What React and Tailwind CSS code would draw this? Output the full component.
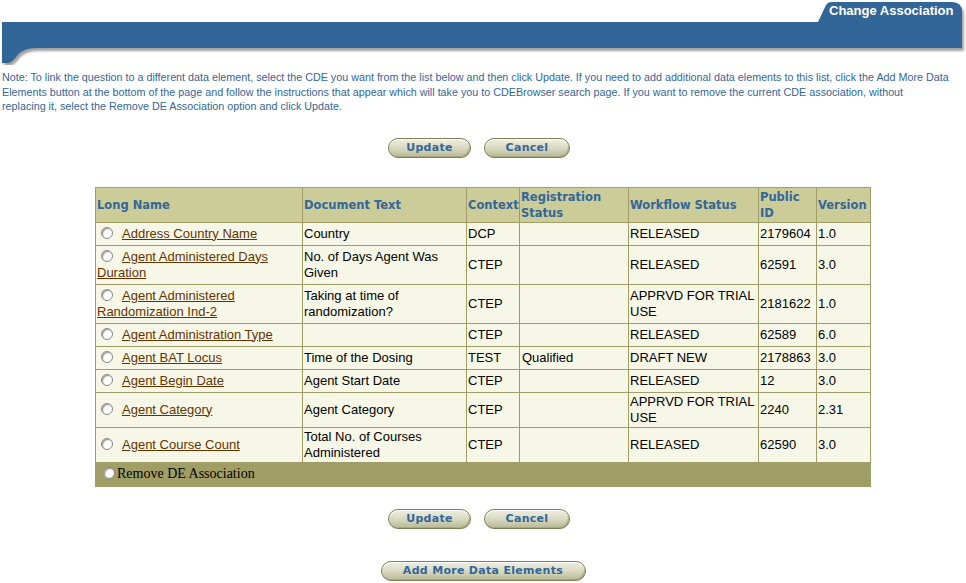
import React from 'react';

const sans = { fontFamily: '"Liberation Sans", Arial, sans-serif' };
const tahoma = { fontFamily: '"DejaVu Sans", Verdana, sans-serif' };
const serif = { fontFamily: '"Liberation Serif", "Times New Roman", serif' };

const rows = [
  { name: ['Address Country Name'], doc: ['Country'], ctx: 'DCP', reg: '', wf: ['RELEASED'], id: '2179604', ver: '1.0', h: 'h-[23px]' },
  { name: ['Agent Administered Days', 'Duration'], doc: ['No. of Days Agent Was', 'Given'], ctx: 'CTEP', reg: '', wf: ['RELEASED'], id: '62591', ver: '3.0', h: 'h-[39px]' },
  { name: ['Agent Administered', 'Randomization Ind-2'], doc: ['Taking at time of', 'randomization?'], ctx: 'CTEP', reg: '', wf: ['APPRVD FOR TRIAL', 'USE'], id: '2181622', ver: '1.0', h: 'h-[39px]' },
  { name: ['Agent Administration Type'], doc: [], ctx: 'CTEP', reg: '', wf: ['RELEASED'], id: '62589', ver: '6.0', h: 'h-[23px]' },
  { name: ['Agent BAT Locus'], doc: ['Time of the Dosing'], ctx: 'TEST', reg: 'Qualified', wf: ['DRAFT NEW'], id: '2178863', ver: '3.0', h: 'h-[23px]' },
  { name: ['Agent Begin Date'], doc: ['Agent Start Date'], ctx: 'CTEP', reg: '', wf: ['RELEASED'], id: '12', ver: '3.0', h: 'h-[23px]' },
  { name: ['Agent Category'], doc: ['Agent Category'], ctx: 'CTEP', reg: '', wf: ['APPRVD FOR TRIAL', 'USE'], id: '2240', ver: '2.31', h: 'h-[35px]' },
  { name: ['Agent Course Count'], doc: ['Total No. of Courses', 'Administered'], ctx: 'CTEP', reg: '', wf: ['RELEASED'], id: '62590', ver: '3.0', h: 'h-[35px]' },
];

const Lines = ({ items }) =>
  items.map((t, i) => (
    <React.Fragment key={i}>
      {i > 0 && <br />}
      {t}
    </React.Fragment>
  ));

const Radio = ({ className = '' }) => (
  <span
    className={`inline-block w-[12px] h-[12px] rounded-full border border-[#8a8a8a] bg-[radial-gradient(circle_at_65%_65%,#ffffff_40%,#dcdcdc_100%)] shadow-[inset_1px_1px_1px_#9a9a9a] align-[-1px] ${className}`}
  />
);

const Button = ({ children, w }) => (
  <button
    className={`h-[20px] ${w} rounded-full border border-[#7e7e56] bg-linear-to-b from-[#efefe2] via-[#d9d9c2] to-[#b9b996] shadow-[inset_0_1px_0_#ffffff,inset_-1px_-1px_0_#a8a884] text-[11px] font-bold text-[#336699] leading-none tracking-[0.3px]`}
    style={tahoma}
  >
    {children}
  </button>
);

const Header = () => (
  <div className="relative h-[65px]">
    <svg width="966" height="65" className="absolute inset-0">
      <defs>
        <filter id="sh" x="-2%" y="-20%" width="104%" height="160%">
          <feDropShadow dx="2" dy="3" stdDeviation="1" floodColor="#555" floodOpacity="0.55" />
        </filter>
      </defs>
      <path
        d="M2 22 H818 L826 5 Q828 2 832 2 H952 Q962 2 962 12 V48 H38 C24 48 20 52 16 57 C12 62 10 63 6 63 H2 Z"
        fill="#336699"
        filter="url(#sh)"
      />
    </svg>
    <span className="absolute left-[829px] top-[3px] text-[13px] font-bold text-white leading-[16px]" style={sans}>
      Change Association
    </span>
  </div>
);

export default function App() {
  return (
    <div className="w-[966px] h-[583px] bg-white overflow-hidden" style={sans}>
      <Header />

      <p className="mt-[5px] px-[2px] text-[10.75px] leading-[14.5px] text-[#336699] whitespace-nowrap">
        Note: To link the question to a different data element, select the CDE you want from the list below and then click Update. If you need to add additional data elements to this list, click the Add More Data
        <br />
        Elements button at the bottom of the page and follow the instructions that appear which will take you to CDEBrowser search page. If you want to remove the current CDE association, without
        <br />
        replacing it, select the Remove DE Association option and click Update.
      </p>

      <div className="mt-[24px] flex justify-center gap-[13px] pr-[8px]">
        <Button w="w-[83px]">Update</Button>
        <Button w="w-[86px]">Cancel</Button>
      </div>

      <table className="mt-[29px] ml-[95px] w-[775px] table-fixed border-collapse border border-[#a09e66] text-[13px] leading-[16px]">
        <colgroup>
          <col className="w-[207px]" />
          <col className="w-[164px]" />
          <col className="w-[53px]" />
          <col className="w-[109px]" />
          <col className="w-[130px]" />
          <col className="w-[58px]" />
          <col className="w-[54px]" />
        </colgroup>
        <thead>
          <tr className="h-[35px] bg-[#cccc99] text-[#336699] text-[11.5px] font-bold text-left" style={tahoma}>
            {['Long Name', 'Document Text', 'Context', ['Registration', 'Status'], 'Workflow Status', ['Public', 'ID'], 'Version'].map((h, i) => (
              <th key={i} className="border border-[#a09e66] px-[1px] align-middle font-bold whitespace-nowrap overflow-hidden">
                {Array.isArray(h) ? <Lines items={h} /> : h}
              </th>
            ))}
          </tr>
        </thead>
        <tbody className="bg-[#f7f7e7] text-black">
          {rows.map((r, i) => (
            <tr key={i} className={r.h}>
              <td className="border border-[#a09e66] px-[1px] align-middle whitespace-nowrap">
                <Radio className="ml-[4px] mr-[9px]" />
                <a href="#" className="text-[#663300] underline">
                  <Lines items={r.name} />
                </a>
              </td>
              <td className="border border-[#a09e66] px-[1px] align-middle whitespace-nowrap">
                <Lines items={r.doc} />
              </td>
              <td className="border border-[#a09e66] px-[1px] align-middle">{r.ctx}</td>
              <td className="border border-[#a09e66] pl-[2px] align-middle">{r.reg}</td>
              <td className="border border-[#a09e66] px-[1px] align-middle whitespace-nowrap">
                <Lines items={r.wf} />
              </td>
              <td className="border border-[#a09e66] px-[1px] align-middle">{r.id}</td>
              <td className="border border-[#a09e66] px-[1px] align-middle">{r.ver}</td>
            </tr>
          ))}
          <tr className="h-[24px] bg-[#a09e64]">
            <td colSpan={7} className="border border-[#a09e66] align-middle text-[14px]" style={serif}>
              <Radio className="ml-[7px] mr-[2px]" />
              Remove DE Association
            </td>
          </tr>
        </tbody>
      </table>

      <div className="mt-[22px] flex justify-center gap-[13px] pr-[8px]">
        <Button w="w-[83px]">Update</Button>
        <Button w="w-[86px]">Cancel</Button>
      </div>

      <div className="mt-[32px] flex justify-center">
        <Button w="w-[205px]">Add More Data Elements</Button>
      </div>
    </div>
  );
}
